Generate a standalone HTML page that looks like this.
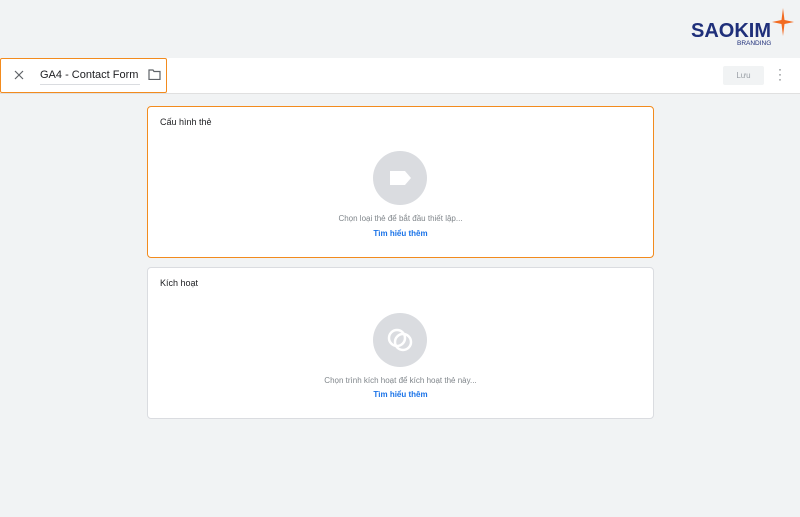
<!DOCTYPE html><html><head><style>
body{margin:0;width:800px;height:517px;background:#f1f3f4;font-family:"Liberation Sans",sans-serif;position:relative;overflow:hidden}
.bar{position:absolute;left:0;top:58px;width:800px;height:35px;background:#fff;border-bottom:1px solid #e0e0e0}
.tab{position:absolute;left:0;top:58px;width:165px;height:33px;border:1px solid #f28b1e;border-radius:2px}
.card{position:absolute;left:147px;width:505px;height:150px;background:#fff;border:1px solid #dadce0;border-radius:4px}
.t{position:absolute;left:12px;top:10px;font-size:9px;color:#202124}
.c{position:absolute;left:225px;width:54px;height:54px;border-radius:50%;background:#dadce0}
.m{position:absolute;width:100%;text-align:center;font-size:8px;color:#80868b}
.l{position:absolute;width:100%;text-align:center;font-size:8px;color:#1a73e8;font-weight:bold}
</style></head><body>
<div style="position:absolute;left:691px;top:20px;font-size:20px;font-weight:bold;color:#1f2f7a;letter-spacing:0px">SAOKIM</div>
<div style="position:absolute;left:737px;top:40px;font-size:6.5px;color:#1f2f7a">BRANDING</div>
<svg style="position:absolute;left:772px;top:8px" width="22" height="28" viewBox="0 0 22 28"><path d="M11 0 L12.5 12 L22 14 L12.5 16 L11 28 L9.5 16 L0 14 L9.5 12Z" fill="#f26b21"/></svg>
<div class="bar"></div>
<div class="tab"></div>
<svg style="position:absolute;left:14px;top:70px" width="10" height="10"><path d="M1 1L9 9M9 1L1 9" stroke="#5f6368" stroke-width="1.2"/></svg>
<div style="position:absolute;left:40px;top:69px;font-size:11px;color:#202124">GA4 - Contact Form</div>
<div style="position:absolute;left:40px;top:84px;width:100px;height:1px;background:#dadce0"></div>
<svg style="position:absolute;left:148px;top:69px" width="13" height="11"><path d="M1 1h4l1 1.5h6v8H1z" fill="none" stroke="#5f6368" stroke-width="1.2"/></svg>
<div style="position:absolute;left:723px;top:66px;width:41px;height:19px;background:#f1f3f4;border-radius:2px;font-size:8px;color:#9aa0a6;text-align:center;line-height:19px">Lưu</div>
<div style="position:absolute;left:778px;top:67px;font-size:12px;color:#5f6368;line-height:5px">·<br>·<br>·</div>
<div class="card" style="top:106px;border-color:#f28b1e"><div class="t">Cấu hình thẻ</div>
<div class="c" style="top:44px"><svg width="54" height="54"><path d="M17 20h15l6 7-6 7H17z" fill="#fff"/></svg></div>
<div class="m" style="top:107px">Chọn loại thẻ để bắt đầu thiết lập...</div>
<div class="l" style="top:122px">Tìm hiểu thêm</div></div>
<div class="card" style="top:267px"><div class="t">Kích hoạt</div>
<div class="c" style="top:45px"><svg width="54" height="54"><circle cx="24" cy="25" r="8" fill="none" stroke="#fff" stroke-width="2.5"/><circle cx="30" cy="29" r="8" fill="none" stroke="#fff" stroke-width="2.5"/></svg></div>
<div class="m" style="top:108px">Chọn trình kích hoạt để kích hoạt thẻ này...</div>
<div class="l" style="top:122px">Tìm hiểu thêm</div></div>
</body></html>
